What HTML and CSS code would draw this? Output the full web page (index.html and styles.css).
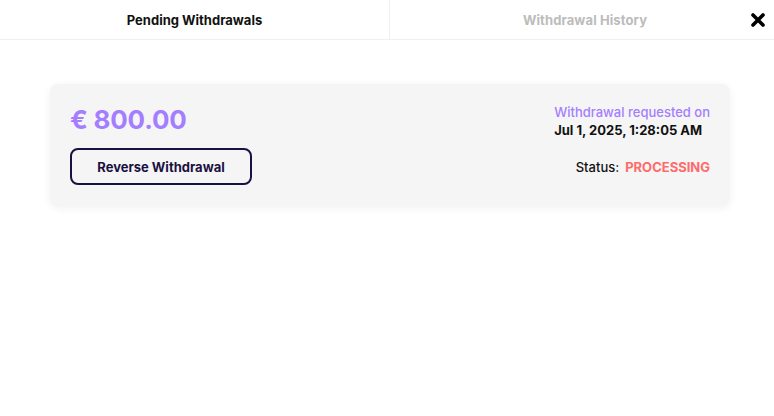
FILE: index.html
```html
<!DOCTYPE html>
<html>
<head>
<meta charset="utf-8">
<link rel="stylesheet" href="styles.css">
</head>
<body>
<div class="tabs">
  <div class="tab active">Pending Withdrawals</div>
  <div class="tab inactive">Withdrawal History</div>
  <button class="close" aria-label="Close">
    <svg width="14" height="14" viewBox="0 0 14 14"><path d="M2 2L12 12M12 2L2 12" stroke="#000" stroke-width="3.6" stroke-linecap="round"/></svg>
  </button>
</div>
<div class="content">
  <div class="card">
    <div class="left">
      <div class="amount">€ 800.00</div>
      <button class="reverse">Reverse Withdrawal</button>
    </div>
    <div class="right">
      <div class="req">Withdrawal requested on</div>
      <div class="date">Jul 1, 2025, 1:28:05 AM</div>
      <div class="status"><span class="label">Status:</span><span class="value">PROCESSING</span></div>
    </div>
  </div>
</div>
</body>
</html>
```
FILE: styles.css
```css
* { box-sizing: border-box; }
body {
  margin: 0;
  font-family: "Inter", "Noto Sans", sans-serif;
  background: #fff;
  width: 774px;
  height: 416px;
}
.tabs {
  position: relative;
  display: flex;
  height: 40px;
  border-bottom: 1px solid #f0f0f0;
}
.tab {
  display: flex;
  align-items: center;
  justify-content: center;
  font-size: 13px;
  font-weight: 700;
}
.tab.active { width: 390px; color: #111; border-right: 1px solid #f0f0f0; }
.tab.inactive { flex: 1; color: #bcbcbc; padding-left: 6px; letter-spacing: 0.1px; }
.close {
  position: absolute;
  right: 8px;
  top: 12px;
  width: 16px;
  height: 16px;
  padding: 0;
  border: 0;
  background: none;
  display: flex;
  align-items: center;
  justify-content: center;
}
.content {
  padding: 44px 44px 0 50px;
}
.card {
  background: #f5f5f5;
  border-radius: 8px;
  box-shadow: 0 2px 8px rgba(0,0,0,0.06);
  display: flex;
  justify-content: space-between;
  padding: 20px 20px 21px 20px;
}
.left { display: flex; flex-direction: column; align-items: flex-start; }
.amount {
  color: #a47eff;
  font-size: 26px;
  font-weight: 700;
  line-height: 32px;
  letter-spacing: -0.2px;
}
.reverse {
  margin-top: 12px;
  width: 182px;
  height: 37px;
  border: 2px solid #1a1142;
  border-radius: 8px;
  background: transparent;
  font-family: inherit;
  font-size: 13px;
  font-weight: 700;
  color: #1a1142;
}
.right {
  display: flex;
  flex-direction: column;
  align-items: flex-start;
  padding-top: 0;
}
.req { color: #a47eff; font-size: 13px; font-weight: 500; line-height: 16px; }
.date { color: #111; font-size: 13px; font-weight: 700; line-height: 17px; margin-top: 2px; }
.status { align-self: flex-end; margin-top: 20px; font-size: 13px; line-height: 17px; display: flex; gap: 6px; }
.status .label { color: #111; font-weight: 500; }
.status .value { color: #ff6b6b; font-weight: 700; }
```
